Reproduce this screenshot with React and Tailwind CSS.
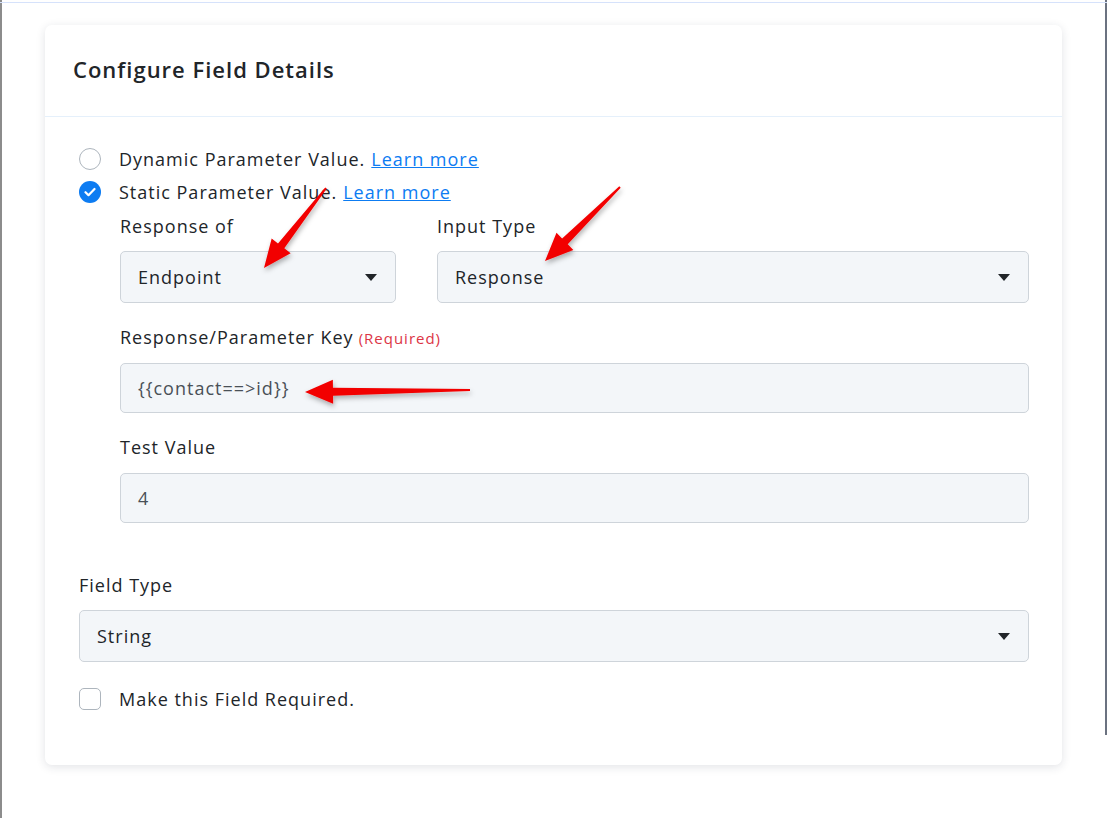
import React from "react";

const Caret = () => (
  <svg width="12" height="7" viewBox="0 0 12 7" className="shrink-0">
    <path d="M0 0h12L6 7z" fill="#212529" />
  </svg>
);

const Select = ({ value, className = "" }) => (
  <div className={`h-[52px] flex items-center justify-between pl-[17px] pr-[18px] bg-[#f3f6f9] border border-[#ced4da] rounded-[5px] text-[18px] text-[#212529] ${className}`}>
    <span>{value}</span>
    <Caret />
  </div>
);

const Input = ({ value }) => (
  <div className="h-[50px] flex items-center pl-[17px] bg-[#f3f6f9] border border-[#ced4da] rounded-[5px] text-[18px] text-[#495057]">
    {value}
  </div>
);

const Label = ({ children, className = "" }) => (
  <div className={`text-[18px] text-[#212529] leading-[24px] ${className}`}>{children}</div>
);

const Arrow = ({ x1, y1, x2, y2 }) => {
  const dx = x2 - x1;
  const dy = y2 - y1;
  const len = Math.hypot(dx, dy);
  const ux = dx / len;
  const uy = dy / len;
  const px = -uy;
  const py = ux;
  const hb = 28;
  const hw = 12;
  const bx = x2 - ux * hb;
  const by = y2 - uy * hb;
  const pts = [
    [x1 + px * 1, y1 + py * 1],
    [bx + px * 4, by + py * 4],
    [bx + px * hw, by + py * hw],
    [x2, y2],
    [bx - px * hw, by - py * hw],
    [bx - px * 4, by - py * 4],
    [x1 - px * 1, y1 - py * 1],
  ]
    .map((p) => p.join(","))
    .join(" ");
  return <polygon points={pts} fill="#f20000" />;
};

export default function App() {
  return (
    <div className="relative w-[1107px] h-[818px] bg-white overflow-hidden tracking-[1px]" style={{ fontFamily: "'Open Sans', 'Noto Sans', sans-serif" }}>
      <div className="absolute left-0 top-0 w-[2px] h-full bg-[#8c8c8c]" />
      <div className="absolute right-0 top-0 w-[2px] h-[735px] bg-[#6b7280]" />
      <div className="absolute left-0 top-[2px] w-full h-[1px] bg-[#d6e2fb]" />

      <div className="pt-[25px] pl-[45px]">
        <div className="w-[1017px] h-[740px] bg-white rounded-[7px] shadow-[0_2px_10px_rgba(30,40,60,0.13)]">
          <div className="h-[92px] flex items-center pl-[28px] border-b border-[#e5f0fb]">
            <h2 className="text-[22px] font-semibold text-[#212529] pb-[2px]">Configure Field Details</h2>
          </div>

          <div className="pl-[34px] pr-[33px] pt-[31px]">
            <div className="flex items-center h-[22px] text-[18px] text-[#212529]">
              <span className="w-[22px] h-[22px] rounded-full border border-[#adb5bd] bg-white" />
              <span className="ml-[18px]">Dynamic Parameter Value.</span>
              <a className="ml-[6px] text-[#0d7cf2] underline">Learn more</a>
            </div>
            <div className="flex items-center h-[22px] mt-[11px] text-[18px] text-[#212529]">
              <span className="w-[22px] h-[22px] rounded-full bg-[#0d7cf2] flex items-center justify-center">
                <svg width="12" height="10" viewBox="0 0 12 10">
                  <path d="M1.5 5.2l3 3L10.5 2" stroke="white" strokeWidth="2.2" fill="none" strokeLinecap="round" strokeLinejoin="round" />
                </svg>
              </span>
              <span className="ml-[18px]">Static Parameter Value.</span>
              <a className="ml-[6px] text-[#0d7cf2] underline">Learn more</a>
            </div>

            <div className="pl-[41px] mt-[11px]">
              <div className="flex gap-[41px]">
                <div className="w-[276px]">
                  <Label>Response of</Label>
                  <Select value="Endpoint" className="mt-[13px]" />
                </div>
                <div className="flex-1">
                  <Label>Input Type</Label>
                  <Select value="Response" className="mt-[13px]" />
                </div>
              </div>

              <Label className="mt-[22px] flex items-baseline">
                Response/Parameter Key
                <span className="ml-[5px] text-[15px] text-[#dc3545]">(Required)</span>
              </Label>
              <div className="mt-[13px]">
                <Input value="{{contact==>id}}" />
              </div>

              <Label className="mt-[22px]">Test Value</Label>
              <div className="mt-[14px]">
                <Input value="4" />
              </div>
            </div>

            <Label className="mt-[50px]">Field Type</Label>
            <Select value="String" className="mt-[13px]" />

            <div className="flex items-center mt-[26px] h-[22px]">
              <span className="w-[22px] h-[22px] rounded-[5px] border border-[#adb5bd] bg-white" />
              <span className="ml-[18px] text-[18px] text-[#212529]">Make this Field Required.</span>
            </div>
          </div>
        </div>
      </div>

      <svg className="absolute left-0 top-0 pointer-events-none" width="1107" height="818">
        <defs>
          <filter id="sh" x="-20%" y="-20%" width="140%" height="140%">
            <feDropShadow dx="1" dy="3" stdDeviation="2.5" floodColor="#000" floodOpacity="0.3" />
          </filter>
        </defs>
        <g filter="url(#sh)">
          <Arrow x1={326} y1={188} x2={264} y2={268} />
          <Arrow x1={620} y1={187} x2={545} y2={261} />
          <Arrow x1={470} y1={390} x2={305} y2={392} />
        </g>
      </svg>
    </div>
  );
}
